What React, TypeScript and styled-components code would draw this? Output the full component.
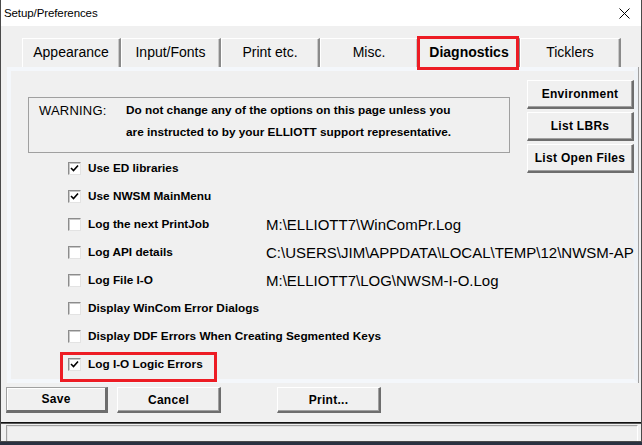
import React from "react";
import styled, { createGlobalStyle } from "styled-components";

const Global = createGlobalStyle`
  html, body { margin: 0; padding: 0; background: #2a3140; }
  * { box-sizing: border-box; }
`;

const SANS = `"Liberation Sans", Arial, sans-serif`;

const Window = styled.div`
  width: 642px;
  height: 442px;
  display: flex;
  flex-direction: column;
  background: #f0f0f0;
  border-left: 1px solid #4a4a4a;
  border-right: 1px solid #4a4a4a;
  border-bottom: 1px solid #4a4a4a;
  font-family: ${SANS};
  color: #000;
  overflow: hidden;
`;

const TitleBar = styled.div`
  height: 26px;
  flex: none;
  background: #fff;
  display: flex;
  align-items: center;
  justify-content: space-between;
  padding: 0 11px 0 3px;
`;

const Title = styled.span`
  font-size: 11.5px;
  letter-spacing: -0.1px;
`;

const Body = styled.div`
  flex: 1;
  display: flex;
  flex-direction: column;
`;

const TabStrip = styled.div`
  display: flex;
  height: 29px;
  margin-top: 12px;
  padding-left: 21px;
  position: relative;
  z-index: 2;
`;

const Tab = styled.div<{ $w: number; $active?: boolean }>`
  position: relative;
  width: ${(p) => p.$w}px;
  height: 29px;
  flex: none;
  display: flex;
  align-items: center;
  justify-content: center;
  padding-bottom: 2px;
  background: #f0f0f0;
  border-top: 1px solid #fff;
  border-left: 1px solid #fff;
  border-right: 2px solid #8a8a8a;
  box-shadow: inset -1px 0 0 #c8c8c8;
  font-size: 14px;
  font-weight: ${(p) => (p.$active ? 700 : 400)};
  ${(p) =>
    p.$active &&
    `
    &::after {
      content: "";
      position: absolute;
      left: -3px;
      right: -1px;
      top: -3px;
      bottom: -3px;
      border: 3px solid #ed1c24;
      pointer-events: none;
    }
  `}
`;

const Panel = styled.div`
  margin: 0 3px 0 6px;
  height: 316px;
  flex: none;
  border: 4px solid #f4f7fb;
  border-right-color: #eef2f6;
  box-shadow: 1px 0 0 #a0a0a0;
  padding: 9px 0 0 17px;
  display: grid;
  grid-template-columns: 1fr 107px;
  grid-template-rows: auto 1fr;
  position: relative;
  z-index: 1;
`;

const WarningBox = styled.div`
  grid-column: 1;
  grid-row: 1;
  justify-self: start;
  width: 482px;
  height: 56px;
  margin-top: 17px;
  border: 1px solid #a0a0a0;
  padding: 1px 0 0 10px;
  display: grid;
  grid-template-columns: 87px auto;
  grid-auto-rows: 22px;
  align-items: center;
  font-size: 11.8px;
  font-weight: 700;
  white-space: nowrap;
`;

const WarnLabel = styled.span`
  font-size: 13px;
  font-weight: 400;
  letter-spacing: 0.2px;
`;

const SideButtons = styled.div`
  grid-column: 2;
  grid-row: 1 / span 2;
  display: flex;
  flex-direction: column;
  gap: 3px;
`;

const ClassicButton = styled.button<{ $default?: boolean }>`
  height: 29px;
  padding: 0;
  background: #f0f0f0;
  font-family: ${SANS};
  font-size: 12px;
  font-weight: 700;
  color: #000;
  border-style: solid;
  border-width: 1px 2px 2px 1px;
  border-color: #fff #6d6d6d #6d6d6d #fff;
  box-shadow: inset -1px -1px 0 #a0a0a0;
  letter-spacing: 0.3px;
`;

const SideButton = styled(ClassicButton)`
  width: 107px;
`;

const OptionList = styled.div`
  grid-column: 1 / span 2;
  grid-row: 2;
  align-self: start;
  margin-top: 1px;
  padding-left: 40px;
  display: flex;
  flex-direction: column;
`;

const Row = styled.div<{ $highlight?: boolean }>`
  position: relative;
  height: 28px;
  display: grid;
  grid-template-columns: 13px 171px minmax(0, 1fr);
  column-gap: 7px;
  align-items: center;
  white-space: nowrap;
  ${(p) =>
    p.$highlight &&
    `
    &::after {
      content: "";
      position: absolute;
      left: -8px;
      top: 2px;
      width: 151px;
      height: 24px;
      border: 3px solid #ed1c24;
      pointer-events: none;
    }
  `}
`;

const Box = styled.span`
  width: 13px;
  height: 13px;
  background: #fff;
  border-style: solid;
  border-width: 1px;
  border-color: #8c8c8c #e3e3e3 #e3e3e3 #8c8c8c;
  box-shadow: inset 1px 1px 0 #c8c8c8;
  display: flex;
  align-items: center;
  justify-content: center;
`;

const Label = styled.span`
  font-size: 11.8px;
  font-weight: 700;
  overflow: visible;
`;

const Path = styled.span`
  font-size: 15px;
  overflow: hidden;
  padding-right: 1px;
`;

const ButtonBar = styled.div`
  display: flex;
  margin-top: 4px;
  padding-left: 5px;
  height: 26px;
  flex: none;
`;

const BarButton = styled(ClassicButton)<{ $w: number; $ml: number }>`
  width: ${(p) => p.$w}px;
  height: 26px;
  margin-left: ${(p) => p.$ml}px;
  font-weight: 700;
  ${(p) =>
    p.$default &&
    `
    border-color: #a0a0a0 #6d6d6d #6d6d6d #a0a0a0;
    border-width: 1px 3px 3px 1px;
    box-shadow: inset 1px 1px 0 #fff;
  `}
`;

const Divider = styled.div`
  margin-top: 9px;
  height: 2px;
  flex: none;
  background: #111;
  border-bottom: 1px solid #555;
`;

const StatusBar = styled.div`
  margin: 1px 3px 0 5px;
  height: 17px;
  flex: none;
  border-style: solid;
  border-width: 1px;
  border-color: #a0a0a0 #fff #fff #a0a0a0;
  box-shadow: inset 1px 1px 0 #e3e3e3;
`;

const Check = () => (
  <svg width="9" height="9" viewBox="0 0 9 9">
    <path d="M1 4 L3.5 6.5 L8 1.5" stroke="#000" strokeWidth="1.6" fill="none" />
  </svg>
);

const CloseIcon = () => (
  <svg width="11" height="11" viewBox="0 0 11 11">
    <path d="M0.5 0.5 L10.5 10.5 M10.5 0.5 L0.5 10.5" stroke="#000" strokeWidth="1" fill="none" />
  </svg>
);

const tabs: { label: string; w: number; active?: boolean }[] = [
  { label: "Appearance", w: 99 },
  { label: "Input/Fonts", w: 100 },
  { label: "Print etc.", w: 99 },
  { label: "Misc.", w: 99 },
  { label: "Diagnostics", w: 101, active: true },
  { label: "Ticklers", w: 101 },
];

const options: { label: string; checked?: boolean; path?: string; highlight?: boolean }[] = [
  { label: "Use ED libraries", checked: true },
  { label: "Use NWSM MainMenu", checked: true },
  { label: "Log the next PrintJob", path: "M:\\ELLIOTT7\\WinComPr.Log" },
  { label: "Log API details", path: "C:\\USERS\\JIM\\APPDATA\\LOCAL\\TEMP\\12\\NWSM-AP" },
  { label: "Log File I-O", path: "M:\\ELLIOTT7\\LOG\\NWSM-I-O.Log" },
  { label: "Display WinCom Error Dialogs" },
  { label: "Display DDF Errors When Creating Segmented Keys" },
  { label: "Log I-O Logic Errors", checked: true, highlight: true },
];

export default function App() {
  return (
    <>
      <Global />
      <Window>
        <TitleBar>
          <Title>Setup/Preferences</Title>
          <CloseIcon />
        </TitleBar>
        <Body>
          <TabStrip>
            {tabs.map((t) => (
              <Tab key={t.label} $w={t.w} $active={t.active}>
                {t.label}
              </Tab>
            ))}
          </TabStrip>
          <Panel>
            <WarningBox>
              <WarnLabel>WARNING:</WarnLabel>
              <span>Do not change any of the options on this page unless you</span>
              <span />
              <span>are instructed to by your ELLIOTT support representative.</span>
            </WarningBox>
            <SideButtons>
              <SideButton>Environment</SideButton>
              <SideButton>List LBRs</SideButton>
              <SideButton>List Open Files</SideButton>
            </SideButtons>
            <OptionList>
              {options.map((o) => (
                <Row key={o.label} $highlight={o.highlight}>
                  <Box>{o.checked && <Check />}</Box>
                  <Label>{o.label}</Label>
                  {o.path && <Path>{o.path}</Path>}
                </Row>
              ))}
            </OptionList>
          </Panel>
          <ButtonBar>
            <BarButton $w={102} $ml={0} $default>
              Save
            </BarButton>
            <BarButton $w={104} $ml={9}>
              Cancel
            </BarButton>
            <BarButton $w={104} $ml={56}>
              Print...
            </BarButton>
          </ButtonBar>
          <Divider />
          <StatusBar />
        </Body>
      </Window>
    </>
  );
}
